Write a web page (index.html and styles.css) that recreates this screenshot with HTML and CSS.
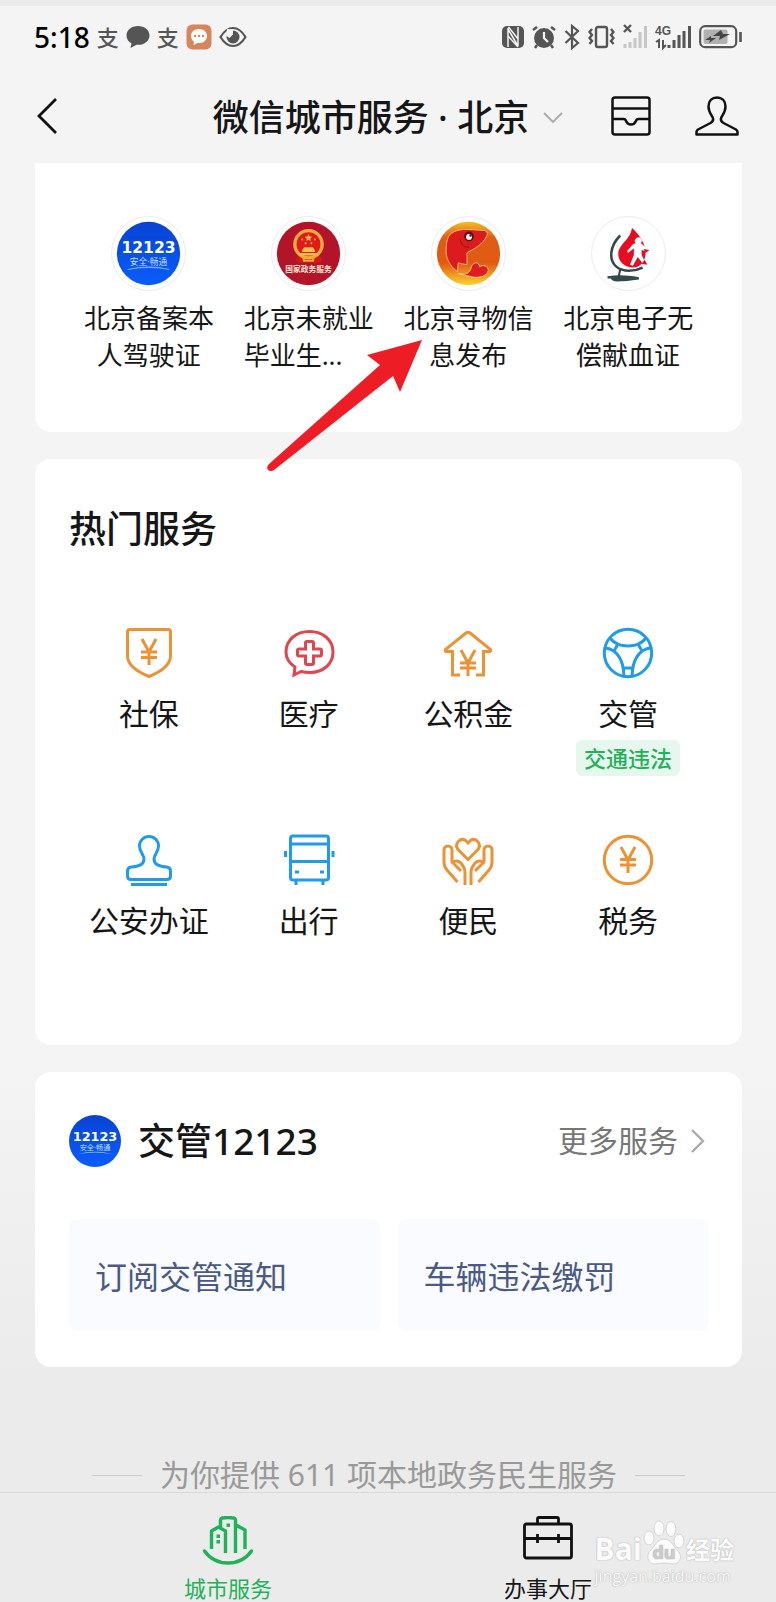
FILE: index.html
```html
<!DOCTYPE html>
<html lang="zh-CN">
<head>
    <meta charset="UTF-8">
    <meta name="viewport" content="width=device-width, initial-scale=1">
    <title>微信城市服务</title>
    <link rel="stylesheet" href="styles.css">
</head>
<body>
    <div class="status-bar">
        <div class="status-left">
            <span class="time">5:18</span>
            <span class="pay">支</span>
            <svg width="24" height="24" viewBox="0 0 24 24"><path d="M12 1C5.500 1 .5 5 .5 10.500c0 3.500 2 6.500 5 8L4.500 23l6-3.200C18 20.500 23.500 16 23.500 10.500 23.500 5 18.500 1 12 1z" fill="#555"/></svg>
            <span class="pay">支</span>
            <svg width="26" height="26" viewBox="0 0 26 26"><rect x="0.500" y="0.500" width="25" height="25" rx="6" fill="#d5865c"/><path d="M13 5c-4.700 0-8 3-8 7 0 2.500 1.300 4.500 3 5.800L7.500 21l4-2c5.500.8 9.500-2.500 9.500-7 0-4-3.300-7-8-7z" fill="#fff"/><g fill="#d5865c"><circle cx="9" cy="12" r="1.200"/><circle cx="13" cy="12" r="1.200"/><circle cx="17" cy="12" r="1.200"/></g></svg>
            <svg width="28" height="22" viewBox="0 0 28 22"><path d="M1.500 11Q7 2 14 2t12.500 9Q21 20 14 20T1.500 11z" fill="none" stroke="#555" stroke-width="2.200"/><circle cx="14" cy="11" r="6.500" fill="#555"/><path d="M8 3l6 .5v5l-3.500 3.500-3-2z" fill="#f4f4f4"/></svg>
        </div>
        <div class="status-right">
            <svg width="22" height="26" viewBox="0 0 22 26"><rect x="0" y="2" width="22" height="22" rx="5" fill="#555"/><path d="M6 23V4M16 22V3M6 5l10 17M6 12l10 11M6.500 3L16 15" fill="none" stroke="#f4f4f4" stroke-width="1.500"/></svg>
            <svg width="24" height="26" viewBox="0 0 24 26"><circle cx="12" cy="14" r="10" fill="#555"/><path d="M1 6l4-3M23 6l-4-3M5 21l-2 3M19 21l2 3" stroke="#555" stroke-width="2.500"/><path d="M12 8v6l4 4" fill="none" stroke="#f4f4f4" stroke-width="2.200"/></svg>
            <svg width="16" height="26" viewBox="0 0 16 26"><path d="M1.500 7L14 19l-6 5V2l6 5L1.500 19" fill="none" stroke="#555" stroke-width="2.200"/></svg>
            <svg width="27" height="26" viewBox="0 0 27 26"><rect x="8" y="3" width="11" height="20" rx="2" fill="none" stroke="#555" stroke-width="2.400"/><path d="M4 5L1.500 8 4 11l-2.500 3L4 17l-2.500 3M23 5l2.500 3L23 11l2.500 3L23 17l2.500 3" fill="none" stroke="#555" stroke-width="2.400"/></svg>
            <svg width="24" height="26" viewBox="0 0 24 26"><path d="M1 1l7 7M8 1L1 8" stroke="#555" stroke-width="2.400"/><path d="M2 24v-4M7 24v-6M12 24V14M17 24V8M22.500 24V2" stroke="#c6c6c6" stroke-width="3"/></svg>
            <svg width="36" height="26" viewBox="0 0 36 26"><text class="net" x="0" y="11">4G</text><path d="M1 18l3-2v8M8 16v8l3-3" fill="none" stroke="#555" stroke-width="2"/><path d="M14 24v-3M19 24v-8M24 24V11M29 24V7M34.500 24V2" stroke="#555" stroke-width="3"/></svg>
            <svg width="43" height="26" viewBox="0 0 43 26"><rect x="1.200" y="2.200" width="36" height="21" rx="5" fill="none" stroke="#555" stroke-width="2.200"/><rect x="4.500" y="5.500" width="24" height="14.500" rx="2" fill="#b0b0b0"/><path d="M22 6l-8 6h7l-1 4 11-6h-7zM12 12l-6 4h5l-1 3 7-5h-5z" fill="#444"/><path d="M41.500 8v10" stroke="#555" stroke-width="2.600"/></svg>
        </div>
    </div>

    <header class="nav-bar">
        <button class="icon-btn" type="button" aria-label="返回">
            <svg width="22" height="38" viewBox="0 0 22 38"><path d="M19 2L2 19l17 17" fill="none" stroke="#111" stroke-width="2.800"/></svg>
        </button>
        <button class="city-btn" type="button">
            <span>微信城市服务 · 北京</span>
            <svg width="20" height="12" viewBox="0 0 20 12"><path d="M1 1l9 9 9-9" fill="none" stroke="#aaa" stroke-width="1.800"/></svg>
        </button>
        <div class="nav-actions">
            <button class="icon-btn" type="button" aria-label="卡包">
                <svg width="40" height="40" viewBox="0 0 40 40"><g fill="none" stroke="#111" stroke-width="2.500"><rect x="1.500" y="1.500" width="37" height="37" rx="2.500"/><path d="M1.500 12.500h37M1.500 23h11q2 0 2.500 2 1.500 3.500 5 3.500t5-3.500q.5-2 2.500-2h11"/></g></svg>
            </button>
            <button class="icon-btn" type="button" aria-label="我的">
                <svg width="44" height="40" viewBox="0 0 44 40"><path d="M22 1.500c-5 0-8.500 3.500-8.500 9 0 5 2.500 8 4 10.500 1.500 3 .5 4.500-2 6L3 33.500Q1.500 34.500 1.500 36v2.500h41V36q0-1.500-1.500-2.500L28.500 27c-2.500-1.500-3.500-3-2-6 1.500-2.500 4-5.500 4-10.500 0-5.500-3.500-9-8.500-9z" fill="none" stroke="#111" stroke-width="2.500" stroke-linejoin="round"/></svg>
            </button>
        </div>
    </header>

    <main class="content">
        <section class="card recent">
            <a class="recent-item" href="#">
                <svg class="round-logo" width="75" height="75" viewBox="0 0 75 75"><defs><linearGradient id="blue" x1="0" y1="0" x2="0" y2="1"><stop offset="0" stop-color="#0843d3"/><stop offset="1" stop-color="#0a5dfa"/></linearGradient></defs><circle cx="37.500" cy="37.500" r="32.500" fill="url(#blue)"/><text class="logo-num" x="37.500" y="37">12123</text><text class="logo-sub" x="37.500" y="49">安全·畅通</text><path d="M16 54q22-6 43 0-21-4-43 0z" fill="#8fc0ff" stroke="#8fc0ff" stroke-width="0.500"/></svg>
                <span class="recent-label">北京备案本人驾驶证</span>
            </a>
            <a class="recent-item" href="#">
                <svg class="round-logo" width="75" height="75" viewBox="0 0 75 75"><circle cx="37.500" cy="37.500" r="32.500" fill="#b3142a"/><path d="M27 40h22l3 4-3 3H27l-3-3z" fill="#d21818"/><circle cx="37.500" cy="28" r="14" fill="#e01b1b" stroke="#f3ab3c" stroke-width="3.500"/><path d="M37.500 17.500l1.100 2.500 2.700.2-2 1.800.6 2.700-2.400-1.400-2.400 1.400.6-2.700-2-1.800 2.700-.2zM33 31h9l2 3v2H31v-2zM28 37h19v2.500H28z" fill="#f7c04a"/><g fill="#f7c04a"><circle cx="31" cy="23" r="1"/><circle cx="44" cy="23" r="1"/><circle cx="34.500" cy="27" r="1"/><circle cx="40.500" cy="27" r="1"/></g><path d="M31 41l3 3h7l3-3-1 5h-11z" fill="#f3ab3c"/><text class="logo-gov" x="37.500" y="57">国家政务服务</text></svg>
                <span class="recent-label clipped">北京未就业毕业生...</span>
            </a>
            <a class="recent-item" href="#">
                <svg class="round-logo" width="75" height="75" viewBox="0 0 75 75"><defs><linearGradient id="gold" x1="0" y1="0" x2="0" y2="1"><stop offset="0" stop-color="#f5bb25"/><stop offset="0.250" stop-color="#df5c14"/><stop offset="0.650" stop-color="#e05a12"/><stop offset="1" stop-color="#fbd32d"/></linearGradient></defs><circle cx="37.500" cy="37.500" r="32.500" fill="url(#gold)"/><path d="M17 20C24 10 38 13 55 14l2 3c-2 8-10 14-18 18-3 1-4 3-3 5v9l-6-1-3-1-1 9C18 50 14 42 14.500 34c0-6 1-11 2.500-14z" fill="#dc1c1c" stroke="#ffc183" stroke-width="0.900"/><path d="M27 58c8 2 11 0 13-5 1-7 8-8 9-2 5-3 11 1 8 6-3 5-12 6-18 4-4-1-7-1-12-3z" fill="#e01c20" stroke="#ffd596" stroke-width="0.900"/><path d="M29 23c1 6 4 8 9 8" fill="none" stroke="#8a1515" stroke-width="1"/><circle cx="38" cy="20" r="5" fill="#571512"/><circle cx="38" cy="20.500" r="3" fill="#fff"/><circle cx="39.500" cy="19" r="1.200" fill="#222"/></svg>
                <span class="recent-label">北京寻物信息发布</span>
            </a>
            <a class="recent-item" href="#">
                <svg class="round-logo" width="75" height="75" viewBox="0 0 75 75"><path d="M41 11c5 5 14 14 14 26 0 9-6 15-13 15-8 0-15-6-15-14 0-10 13-15 14-27z" fill="#e60d22"/><path d="M47 21a3.500 3.500 0 0 1 3 6c3 1 4 5 9 7l-1 2-7-2 0 5 5 10-2 1-7-9-5 9-3-1 4-10v-7l-6 5-1-2c4-3 5-8 9-8a3.500 3.500 0 0 1 2-6z" fill="#fff"/><path d="M53 33l6 1-4 3zM54 44l3 5-6-1z" fill="#e60d22"/><path d="M29 19C18 30 17 44 25 51c7 6 19 5 27 1" fill="none" stroke="#35484c" stroke-width="2.600"/><path d="M29 54l-2 9M16 62q7-1 13-1 8 0 19 2-14 2-19 2-8 1-9-3z" fill="#35484c" stroke="#35484c" stroke-width="2.200"/></svg>
                <span class="recent-label">北京电子无偿献血证</span>
            </a>
            <svg class="pointer" width="160" height="134" viewBox="0 0 160 134"><path d="M159 0l-55 15 13 10L6 124q-3 3-1 6 3 2 6 0L130 36l7 16z" fill="#ee1c24"/></svg>
        </section>

        <section class="card hot">
            <h2 class="card-title">热门服务</h2>
            <div class="hot-grid">
                <a class="hot-item orange" href="#">
                    <svg class="hot-icon" viewBox="0 0 52 52"><path d="M7 2.500h38q2.500 0 2.500 2.500v24c0 8-8 15-21.500 20.500C12.500 44 4.500 37 4.500 29V5Q4.500 2.500 7 2.500z"/><path d="M19 12l7 13 7-13M26 25v13M18 25h16M18 30.500h16"/></svg>
                    <span>社保</span>
                </a>
                <a class="hot-item red" href="#">
                    <svg class="hot-icon" viewBox="0 0 52 52"><path d="M11 48l1-8C6 36 3 31 3 25 3 13 13 4.500 26.500 4.500S50 13 50 25 40 45.500 27 45.500q-5 0-9-1z"/><path d="M24 14.500h5q1.500 0 1.500 1.500v6H37q1.500 0 1.500 1.500v4Q38.500 29 37 29h-6.500v7q0 1.500-1.500 1.500h-5q-1.500 0-1.500-1.500v-7H16q-1.500 0-1.500-1.500v-4Q14.500 22 16 22h6.500v-6q0-1.500 1.500-1.500z"/></svg>
                    <span>医疗</span>
                </a>
                <a class="hot-item orange" href="#">
                    <svg class="hot-icon" viewBox="0 0 52 52"><path d="M18 48h-7.500V24.500H4q-1.500-1 0-2.500L24 6q2-1.500 4 0l20 16q1.500 1.500 0 2.500h-6.500V48H34"/><path d="M19 23l7 13 7-13M26 36v13M18 36h16M18 41h16"/></svg>
                    <span>公积金</span>
                </a>
                <a class="hot-item blue" href="#">
                    <svg class="hot-icon" viewBox="0 0 52 52"><circle cx="26" cy="26" r="23.700"/><path d="M8 11q6 8 18 8T44 11M3 21c12 1 18.500 12 19 28M49 21c-12 1-18.500 12-19 28M16 17l-4 7M36 17l4 7M22 41h8"/></svg>
                    <span>交管</span>
                    <span class="tag">交通违法</span>
                </a>
                <a class="hot-item blue" href="#">
                    <svg class="hot-icon" viewBox="0 0 52 52"><path d="M8 45.500h36q3.500 0 3.500-3.500v-5q0-3.500-4-4C35 32.500 31 30 31 25c0-4 4.500-7 4.500-13a9.500 9.500 0 0 0-19 0c0 6 4.500 9 4.500 13 0 5-4 7.500-12.500 8q-4 .5-4 4v5q0 3.500 3.500 3.500z"/><path d="M8 50.500h36"/></svg>
                    <span>公安办证</span>
                </a>
                <a class="hot-item blue" href="#">
                    <svg class="hot-icon" viewBox="0 0 52 52"><rect x="7.500" y="2" width="38" height="44" rx="2.500"/><path d="M7.500 10h38M7.500 27.500h38M13 46v5M40 46v5M12 38h4M37 38h4M2.500 17v6M50 17v6"/></svg>
                    <span>出行</span>
                </a>
                <a class="hot-item orange" href="#">
                    <svg class="hot-icon" viewBox="0 0 52 52"><path d="M26 25.500L16 15.500C12 10 18 3 23.500 6.500L26 9l2.500-2.500C34 3 40 10 36 15.500z"/><path d="M15.500 48L5 36q-3-3.500-3-8V16a4 4 0 0 1 8 0v12l9 9M10 29q4-4 9 0l2 3q2 2.500 2 6v13M36.500 48L47 36q3-3.500 3-8V16a4 4 0 0 0-8 0v12l-9 9M42 29q-4-4-9 0l-2 3q-2 2.500-2 6v13"/></svg>
                    <span>便民</span>
                </a>
                <a class="hot-item orange" href="#">
                    <svg class="hot-icon" viewBox="0 0 52 52"><circle cx="26" cy="26" r="23.700"/><path d="M19 13l7 13 7-13M26 26v13M18 25.500h16M18 31h16"/></svg>
                    <span>税务</span>
                </a>
            </div>
        </section>

        <section class="card traffic">
            <div class="traffic-head">
                <svg width="52" height="52" viewBox="5 5 65 65"><circle cx="37.500" cy="37.500" r="32.500" fill="url(#blue)"/><text class="logo-num" x="37.500" y="37">12123</text><text class="logo-sub" x="37.500" y="49">安全·畅通</text><path d="M16 54q22-6 43 0-21-4-43 0z" fill="#8fc0ff"/></svg>
                <h2 class="card-title">交管12123</h2>
                <a class="more" href="#">
                    更多服务
                    <svg width="16" height="26" viewBox="0 0 16 26"><path d="M2 2l11 11L2 24" fill="none" stroke="#aaa" stroke-width="2.400"/></svg>
                </a>
            </div>
            <div class="tiles">
                <a class="tile" href="#">订阅交管通知</a>
                <a class="tile" href="#">车辆违法缴罚</a>
            </div>
        </section>

        <p class="summary">为你提供 611 项本地政务民生服务</p>
    </main>

    <nav class="tab-bar">
        <a class="tab active" href="#">
            <svg width="52" height="50" viewBox="0 0 52 50"><g fill="none" stroke="#1fb259" stroke-width="3.400" stroke-linejoin="round"><path d="M2.500 35C14 51 38 51 49.500 35" stroke-linecap="round"/><path d="M9.500 33V15l7-4 7 4v22M18.500 12V4q0-1.500 1.500-2 6-.8 12 0 1.500.5 1.500 2v33M34 9l9 5v19"/></g><path d="M14.500 18.500H18V22h-3.500zM14.500 24H18v3.500h-3.500zM24.500 7.500H28V11h-3.500z" fill="#1fb259"/></svg>
            城市服务
        </a>
        <a class="tab" href="#">
            <svg width="52" height="50" viewBox="0 0 52 50"><g fill="none" stroke="#111" stroke-width="2.800"><rect x="2.500" y="8" width="47" height="34" rx="2"/><path d="M15.500 8V3q0-1.500 1.500-1.500h18q1.500 0 1.500 1.500v5M2.500 22.500h47M15.500 18v9M36.500 18v9"/></g></svg>
            办事大厅
        </a>
    </nav>

    <div class="watermark">
        <div class="brand">
            <span>Bai</span>
            <svg width="42" height="46" viewBox="0 0 42 46"><g fill="#fbfbfb" stroke="#d4d4d4"><ellipse cx="6" cy="18" rx="5" ry="7"/><ellipse cx="16" cy="8.500" rx="5" ry="7.500"/><ellipse cx="28" cy="9" rx="5" ry="7.500"/><ellipse cx="36" cy="21" rx="5" ry="7"/><path d="M21 19c-7 0-9 7-13 11-6 5-3 14 4 14 4 0 5-1 9-1s5 1 9 1c8 0 10-9 4-14-4-4-6-11-13-11z"/></g><text class="paw-text" x="21" y="39">du</text></svg>
            <span class="cn">经验</span>
        </div>
        <div class="site">jingyan.baidu.com</div>
    </div>
</body>
</html>
```

FILE: styles.css
```css
* {
    box-sizing: border-box;
}

body {
    position: relative;
    margin: 0;
    border-top: 6px solid #ebebeb;
    background: linear-gradient(#f4f4f4 66%, #ebebeb 86%);
    color: #161616;
    font-family: "Noto Sans", "Noto Sans CJK SC", sans-serif;
}

a {
    color: inherit;
    text-decoration: none;
}

button {
    padding: 0;
    border: none;
    background: none;
    color: inherit;
    font-family: inherit;
    cursor: pointer;
}

svg {
    display: block;
    flex-shrink: 0;
}

h2, p {
    margin: 0;
}

/* status bar */
.status-bar {
    display: flex;
    justify-content: space-between;
    align-items: center;
    height: 62px;
    padding: 0 34px;
}

.status-left, .status-right {
    display: flex;
    align-items: center;
    gap: 8px;
}

.status-left {
    gap: 7px;
}

.time {
    color: #000;
    font-size: 28px;
    font-weight: 500;
    line-height: 32px;
}

.pay {
    color: #555;
    font-size: 22px;
    font-weight: 500;
    line-height: 26px;
}

.net {
    fill: #555;
    font-family: "Liberation Sans", sans-serif;
    font-size: 12px;
    font-weight: bold;
}

/* header */
.nav-bar {
    display: grid;
    grid-template-columns: 1fr auto 1fr;
    align-items: center;
    height: 95px;
    padding: 0 37px;
}

.city-btn {
    display: flex;
    align-items: center;
    gap: 14px;
    padding-top: 4px;
    font-size: 36px;
    font-weight: 500;
    line-height: 50px;
    white-space: nowrap;
}

.icon-btn {
    justify-self: start;
}

.nav-actions {
    display: flex;
    justify-content: flex-end;
    gap: 44px;
}

/* cards */
.content {
    padding: 0 34px 0 35px;
}

.card {
    margin-bottom: 27px;
    padding: 0 34px;
    border-radius: 16px;
    background: #fff;
}

.card-title {
    font-size: 37px;
    font-weight: 500;
    line-height: 50px;
}

.recent {
    position: relative;
    display: grid;
    grid-template-columns: repeat(4, 1fr);
    padding-top: 53px;
    padding-bottom: 58px;
    border-radius: 0 0 16px 16px;
}

.recent-item {
    display: flex;
    flex-direction: column;
    align-items: center;
    gap: 9px;
}

.round-logo {
    border: 1px solid #ececec;
    border-radius: 50%;
}

.recent-label {
    width: 130px;
    font-size: 26px;
    line-height: 37px;
    text-align: center;
}

.clipped {
    text-align: left;
}

.pointer {
    position: absolute;
    top: 177px;
    left: 228px;
}

.logo-num, .logo-sub, .logo-gov {
    fill: #fff;
    text-anchor: middle;
}

.logo-num {
    font-family: "DejaVu Sans", sans-serif;
    font-size: 16px;
    font-weight: bold;
}

.logo-sub {
    fill: #b9dcff;
    font-size: 9px;
}

.logo-gov {
    fill: #fbe5d0;
    font-size: 8px;
    font-weight: bold;
}

/* hot services */
.hot {
    padding-top: 45px;
    padding-bottom: 104px;
}

.hot-grid {
    display: grid;
    grid-template-columns: repeat(4, 1fr);
    row-gap: 58px;
    margin-top: 73px;
}

.hot-item {
    display: flex;
    flex-direction: column;
    align-items: center;
    font-size: 30px;
    line-height: 40px;
}

.hot-icon {
    width: 52px;
    height: 52px;
    margin-bottom: 15px;
    fill: none;
    stroke: currentColor;
    stroke-width: 3;
}

.orange .hot-icon {
    color: #ea9234;
}

.red .hot-icon {
    color: #e0464d;
}

.blue .hot-icon {
    color: #1f9be8;
}

.tag {
    margin-top: 6px;
    padding: 0 8px;
    border-radius: 6px;
    background: #e6f7ee;
    color: #1fb259;
    font-size: 22px;
    font-weight: 500;
    line-height: 36px;
}

/* 12123 */
.traffic {
    margin-bottom: 0;
    padding-top: 43px;
    padding-bottom: 36px;
}

.traffic-head {
    display: flex;
    align-items: center;
    gap: 17px;
}

.more {
    display: flex;
    align-items: center;
    gap: 12px;
    margin-left: auto;
    padding-right: 2px;
    color: #777;
    font-size: 30px;
    line-height: 40px;
}

.tiles {
    display: grid;
    grid-template-columns: 1fr 1fr;
    gap: 18px;
    margin-top: 52px;
}

.tile {
    padding: 38px 26px 34px;
    border-radius: 8px;
    background: #f9fbfe;
    color: #4a5a84;
    font-size: 32px;
    line-height: 40px;
}

.summary {
    display: flex;
    justify-content: center;
    align-items: center;
    gap: 18px;
    padding: 92px 0 1px;
    color: #999;
    font-size: 30px;
    line-height: 32px;
}

.summary::before, .summary::after {
    content: "";
    width: 50px;
    height: 1px;
    background: #ccc;
}

/* bottom tabs */
.tab-bar {
    display: flex;
    padding: 23px 68px 0;
    border-top: 1px solid #d9d9d9;
    background: #ebebeb;
}

.tab {
    display: flex;
    flex: 1;
    flex-direction: column;
    align-items: center;
    gap: 8px;
    font-size: 22px;
    line-height: 28px;
}

.active {
    color: #1fb259;
}

/* watermark over the tab bar */
.watermark {
    position: absolute;
    right: 42px;
    bottom: 16px;
    color: #fbfbfb;
    font-family: "Open Sans", sans-serif;
    text-shadow: 0 0 1px #aaa, 0 0 2px #ccc;
}

.brand {
    display: flex;
    align-items: flex-end;
    gap: 1px;
    font-size: 30px;
    font-weight: bold;
    line-height: 34px;
}

.cn {
    font-family: "Noto Sans CJK SC", sans-serif;
    font-size: 24px;
}

.paw-text {
    fill: #ccc;
    font-size: 18px;
    text-anchor: middle;
}

.site {
    font-size: 16px;
    line-height: 20px;
}
```
